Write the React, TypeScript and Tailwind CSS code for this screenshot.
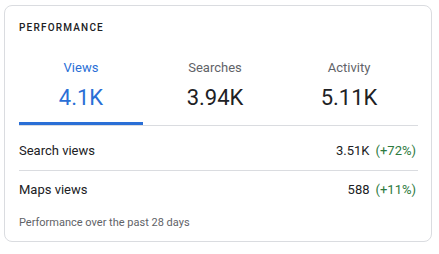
const tabs = [
  { label: 'Views', value: '4.1K', active: true },
  { label: 'Searches', value: '3.94K', active: false },
  { label: 'Activity', value: '5.11K', active: false },
];

export default function App() {
  return (
    <div className="w-[439px] h-[254px] bg-white pt-[5px] pl-[4px]" style={{ fontFamily: 'Roboto, "Liberation Sans", sans-serif' }}>
      <div className="w-[428px] h-[237px] border border-[#dadce0] rounded-lg px-[14px] pt-[16px]">
        <div className="text-[10px] leading-[12px] tracking-[0.12em] text-[#202124] font-medium">PERFORMANCE</div>

        {/* Tabs */}
        <div className="mt-[26px] flex gap-[10px] border-b border-[#dadce0] w-[399px]">
          {tabs.map(t => (
            <div key={t.label} className="w-[124px] flex flex-col items-center">
              <span className={`text-[13px] leading-[16px] ${t.active ? 'text-[#2a6fd6]' : 'text-[#5f6368]'}`}>{t.label}</span>
              <span className={`mt-[9px] text-[22px] leading-[26px] ${t.active ? 'text-[#2a6fd6]' : 'text-[#202124]'}`}>{t.value}</span>
              <div className={`mt-[11px] h-[3px] w-full ${t.active ? 'bg-[#2a6fd6]' : 'bg-transparent'}`} />
            </div>
          ))}
        </div>

        {/* Rows */}
        <div className="w-[399px] text-[13px] leading-[16px] text-[#202124]">
          <div className="flex justify-between pt-[17px] pb-[11px] border-b border-[#dadce0]">
            <span>Search views</span>
            <span className="pr-[2px]">
              3.51K<span className="ml-[6px] text-[#2d7a3e]">(+72%)</span>
            </span>
          </div>
          <div className="flex justify-between pt-[11px]">
            <span>Maps views</span>
            <span className="pr-[2px]">
              588<span className="ml-[6px] text-[#2d7a3e]">(+11%)</span>
            </span>
          </div>
        </div>
        <div className="mt-[18px] text-[11px] leading-[13px] text-[#5f6368]">Performance over the past 28 days</div>
      </div>
    </div>
  );
}
